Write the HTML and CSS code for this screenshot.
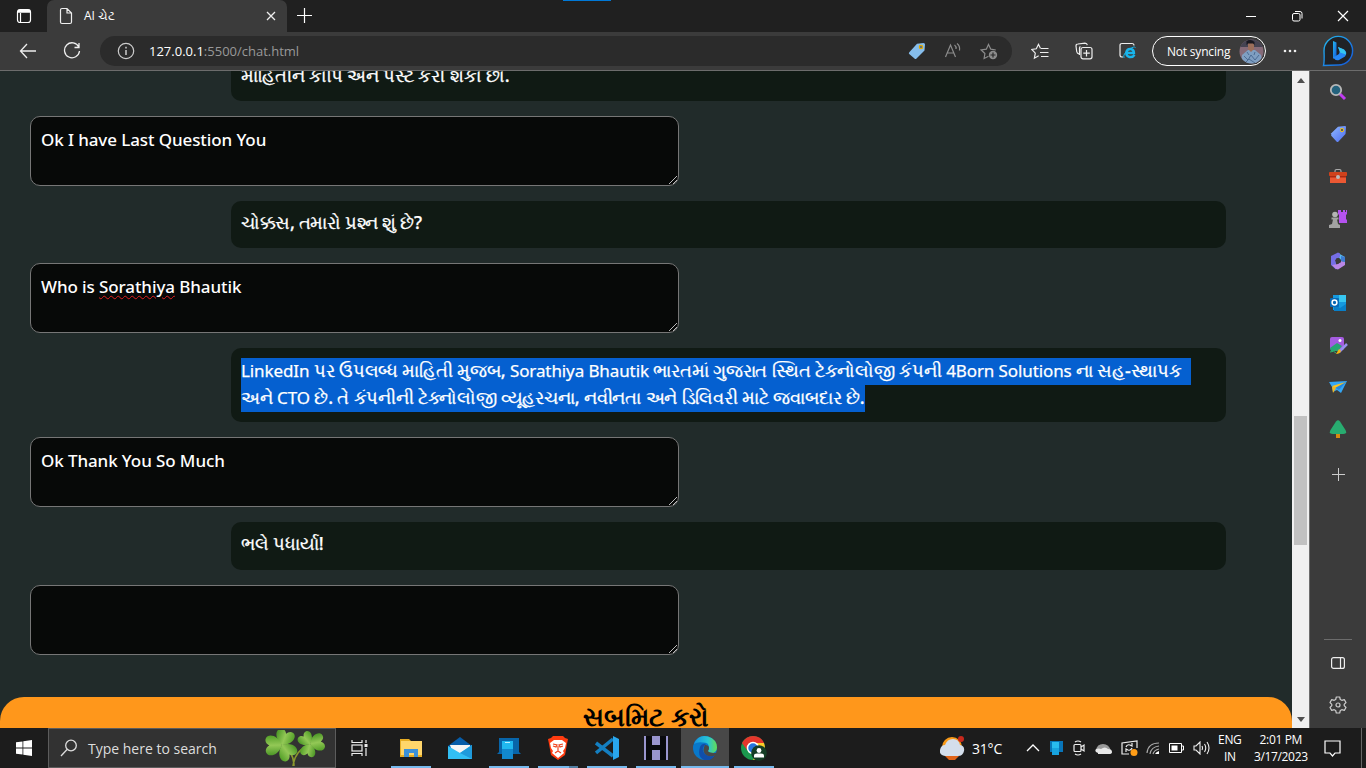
FILE: index.html
```html
<!DOCTYPE html>
<html lang="gu">
<head>
<meta charset="utf-8">
<title>AI ચેટ</title>
<link rel="stylesheet" href="styles.css">
</head>
<body>
<div class="screen">
  <header class="titlebar">
    <div class="tab-actions"><svg width="16" height="16" viewBox="0 0 16 16" fill="none" stroke="#fff" stroke-width="1.2"><rect x="1.5" y="1.5" width="13" height="13" rx="2.5"/><path d="M2 3.7h12M2 2.7h12" stroke-width="2"/><path d="M4.5 5v9.5"/></svg></div>
    <div class="tab">
      <svg width="14" height="18" viewBox="0 0 14 18" fill="none" stroke="#eee" stroke-width="1.2"><path d="M1.5 3q0-1.500 1.500-1.500h5l4.500 4.500v9q0 1.500-1.500 1.500H3q-1.500 0-1.500-1.500zM8 1.500V6h4.500"/></svg>
      <span class="tab-title">AI ચેટ</span>
      <svg width="10" height="10" viewBox="0 0 10 10" stroke="#eee" stroke-width="1.3"><path d="M1 1l8 8M9 1L1 9"/></svg>
    </div>
    <div class="new-tab"><svg width="15" height="15" viewBox="0 0 15 15" stroke="#fff" stroke-width="1.2"><path d="M7.500 0v15M0 7.500h15"/></svg></div>
    <div class="top-accent"></div>
    <div class="win-buttons">
      <svg width="12" height="12" viewBox="0 0 12 12" stroke="#fff"><path d="M1 6.500h10"/></svg>
      <svg width="12" height="12" viewBox="0 0 12 12" fill="none" stroke="#fff"><rect x="1.500" y="3.500" width="7.500" height="7.500" rx="1.500"/><path d="M4 1.500h5q2 0 2 2v5"/></svg>
      <svg width="12" height="12" viewBox="0 0 12 12" stroke="#fff" stroke-width="1.200"><path d="M1 1l10 10M11 1L1 11"/></svg>
    </div>
  </header>

  <div class="toolbar">
    <svg class="back" width="18" height="16" viewBox="0 0 18 16" fill="none" stroke="#eee" stroke-width="1.300"><path d="M17 8H1.500M8 1L1.500 8 8 15"/></svg>
    <svg class="reload" width="18" height="18" viewBox="0 0 18 18" fill="none" stroke="#eee" stroke-width="1.300"><path d="M15.800 5A7.500 7.500 0 1 0 16.500 9M16 1v4.500h-4.500"/></svg>
    <div class="address">
      <svg width="18" height="18" viewBox="0 0 18 18" fill="none" stroke="#ccc" stroke-width="1.200"><circle cx="9" cy="9" r="7.700"/><path d="M9 8v5M9 4.800v1.600" stroke-width="1.500"/></svg>
      <span class="url"><b>127.0.0.1</b>:5500/chat.html</span>
      <div class="address-icons">
        <svg width="18" height="18" viewBox="0 0 18 18"><path d="M1.300 10.300L9 1.800 15.500 1q1.500 0 1.500 1.500l-.5 6-8 8q-1 1-2 0L1.200 12q-.8-.8.100-1.700z" fill="#86bdeb"/><circle cx="13" cy="5" r="1.700" fill="#47698d" stroke="#e5a800" stroke-width="1.200"/></svg>
        <svg width="18" height="18" viewBox="0 0 18 18" fill="none" stroke="#8c8c8c" stroke-width="1.200"><path d="M1.500 15L6.500 3l5 12M3.200 11h6.600M10.500 3q2 1.500 1.500 4M13 1.500q3.300 2.500 2.500 7"/></svg>
        <svg width="18" height="18" viewBox="0 0 18 18" fill="none" stroke="#8c8c8c" stroke-width="1.200"><path d="M8.500 14.300L4.100 16.500l.8-5L1.200 8l5.100-.8L8.500 2.500l2.300 4.700 5 .8"/><circle cx="13" cy="13" r="4.200" fill="#8c8c8c" stroke="none"/><path d="M13 10.500v5M10.500 13h5" stroke="#2b2b2b"/></svg>
      </div>
    </div>
    <div class="tools">
      <svg width="18" height="18" viewBox="0 0 18 18" fill="none" stroke="#eee" stroke-width="1.200"><path d="M9.500 6.500L7.500 2.300 5.300 6.800.8 7.500l3.500 3.600-.9 5.100 4.300-2.400M10 6.500h7.500M9 10.500h8.500M10 14.500h7.500"/></svg>
      <svg width="18" height="18" viewBox="0 0 18 18" fill="none" stroke="#eee" stroke-width="1.200"><path d="M4 12Q2 11.500 1.700 9.500L1 4Q1 2 3 2l7-.8q2 0 2.300 2"/><path d="M4.500 13V6q0-1 1-1.400"/><rect x="6" y="5.500" width="11" height="11.300" rx="2"/><path d="M11.500 8v6.500M8.300 11.200h6.500"/></svg>
      <svg width="18" height="18" viewBox="0 0 18 18" fill="none"><path d="M4 15H3q-2 0-2-2V3.500q0-2 2-2h10q2 0 2 2" stroke="#eee" stroke-width="1.200"/><path d="M15.500 12.800q-1.700 2.700-5 2.200-3.600-1-3.200-4.500.8-3.500 4.300-3.400 3.200.3 3.300 3.800H8" stroke="#18b5ec" stroke-width="2.500"/><path d="M5 16q-1.500-4 5-8.700 5.500-3.500 6.500-1.700" stroke="#18b5ec"/></svg>
    </div>
    <div class="profile"><span>Not syncing</span>
      <svg width="25" height="25" viewBox="0 0 25 25"><defs><clipPath id="face"><circle cx="12.500" cy="12.500" r="12"/></clipPath></defs><g clip-path="url(#face)"><path d="M0 0h25v25H0z" fill="#866b79"/><path d="M0 0h25v8H0z" fill="#454352"/><path d="M2 25l1-9 6-5h7l6 5 2 9z" fill="#7f9fc2"/><path d="M9 4h6v6l-3 3-3-3z" fill="#9b6e5b"/><path d="M7.500 6V2q4.500-2.500 8 1v3l-1.500-1.500H9z" fill="#191820"/><path d="M5 17l4 4 3-5 4 5 4-5M6 24l4-4 6 4M8 13l2 3M16 13l-1 3" stroke="#4c6c94" fill="none"/></g></svg>
    </div>
    <svg class="more" width="14" height="4" viewBox="0 0 14 4" fill="#eee"><circle cx="2" cy="2" r="1.300"/><circle cx="7" cy="2" r="1.300"/><circle cx="12" cy="2" r="1.300"/></svg>
    <svg class="bing" width="32" height="32" viewBox="0 0 32 32"><defs><linearGradient id="bg" x2="1" y2="1"><stop stop-color="#24b9ed"/><stop offset="1" stop-color="#1455db"/></linearGradient></defs><path d="M1.500 30.500Q2.500 27 2 16a14.300 14.300 0 1 1 14.500 14z" fill="#202226" stroke="url(#bg)" stroke-width="1.400"/><path d="M11 6l3.500 1.500v13L11 24z" fill="url(#bg)"/><path d="M11 22.500l6-3.500 1-3-2-4 6 2.500q4 3 1 7l-6 3.500q-3 1.200-6-2.500z" fill="#2687f5"/><path d="M16 12l6 2.500q2 2 2 5l-6-2z" fill="#35c6ef"/></svg>
  </div>

  <div class="middle">
    <main class="page">
      <div class="chat">
        <div class="answer"><span class="t1">માહિતીને કોપિ અને પેસ્ટ કરી શકો છો.</span></div>
        <div class="question"><span>Ok I have Last Question You</span><svg class="grip" width="8" height="8" viewBox="0 0 8 8"><path d="M0 8L8 0M4 8l4-4" stroke="#bbb"/></svg></div>
        <div class="answer"><span class="t2">ચોક્કસ, તમારો પ્રશ્ન શું છે?</span></div>
        <div class="question"><span>Who is <u>Sorathiya</u> Bhautik</span><svg class="grip" width="8" height="8" viewBox="0 0 8 8"><path d="M0 8L8 0M4 8l4-4" stroke="#bbb"/></svg></div>
        <div class="answer double"><span class="selected s1"><em>LinkedIn</em> પર ઉપલબ્ધ માહિતી મુજબ, <em>Sorathiya Bhautik</em> ભારતમાં ગુજરાત સ્થિત ટેકનોલોજી કંપની <em>4Born Solutions</em> ના સહ-સ્થાપક</span><span class="selected s2">અને <em>CTO</em> છે. તે કંપનીની ટેક્નોલોજી વ્યૂહરચના, નવીનતા અને ડિલિવરી માટે જવાબદાર છે.</span></div>
        <div class="question"><span>Ok Thank You So Much</span><svg class="grip" width="8" height="8" viewBox="0 0 8 8"><path d="M0 8L8 0M4 8l4-4" stroke="#bbb"/></svg></div>
        <div class="answer tall"><span class="t3">ભલે પધાર્યા!</span></div>
        <div class="question"><svg class="grip" width="8" height="8" viewBox="0 0 8 8"><path d="M0 8L8 0M4 8l4-4" stroke="#bbb"/></svg></div>
      </div>
      <div class="submit"><span>સબમિટ કરો</span></div>
    </main>
    <div class="scrollbar"><i class="up"></i><div class="thumb"></div><i class="down"></i></div>
    <aside class="sidebar">
      <div class="side-apps">
        <svg width="18" height="18" viewBox="0 0 18 18"><path d="M11 11l5 5" stroke="#c03bf2" stroke-width="3"/><circle cx="7" cy="7" r="5.200" fill="#24627d" stroke="#b8b8b8" stroke-width="1.800"/></svg>
        <svg width="18" height="18" viewBox="0 0 18 18"><defs><linearGradient id="tg" x2="1" y2="1"><stop stop-color="#91baff"/><stop offset="1" stop-color="#4d6cf0"/></linearGradient></defs><path d="M1.500 9L9 1.800 16 1q1 0 1 1l-.5 7-7 7.500q-1 1-2 0l-5-5.500q-1-1 0-2z" fill="url(#tg)"/><circle cx="13" cy="5" r="1.700" fill="#575a65" stroke="#efc319"/></svg>
        <svg width="18" height="18" viewBox="0 0 18 18"><path d="M6 5V4q0-1.500 1.500-1.500h3Q12 2.500 12 4v1" fill="none" stroke="#aaa" stroke-width="1.200"/><rect y="5" width="18" height="4" rx=".8" fill="#cf421c"/><path d="M1 9h16v7H1z" fill="#eb5833"/><path d="M1 9h16v1.500H1z" fill="#a92912"/><circle cx="9" cy="10" r="2" fill="#bbb"/></svg>
        <svg width="18" height="18" viewBox="0 0 18 18"><path d="M10 0h2v2h2V0h2v2h1V0h1v4l-1 1v4l1 1v3h-8V5l-1-1V0z" fill="#b552ef"/><circle cx="6" cy="4.500" r="2.800" fill="#b4b4b4"/><path d="M2.500 7.500h7v2H8l1 4.500 2 1v3H0v-3l3-1 1-4.500H2.500z" fill="#a2a2a2"/></svg>
        <svg width="18" height="18" viewBox="0 0 18 18"><path d="M9 1l7 4v5l-4-1-3-3z" fill="#57b7ee"/><path d="M9 .5L2 4v9l5 4.500V11L6 8l5-3V1.500z" fill="#756ee6"/><path d="M3 13l6-1 3-3 4 1v3l-7 4.500-2-.5z" fill="#b987e6"/><path d="M12 4l4 1v5l-4-1z" fill="#3d7bd2"/><path d="M7 6.500l3-.8 2 2v2.500l-3 1.500-2-2z" fill="#3b3b3b"/></svg>
        <svg width="18" height="18" viewBox="0 0 18 18"><path d="M4 1h13v15H4z" fill="#1599df"/><path d="M10 1h7v7h-7z" fill="#37c6f1"/><path d="M5 10l6 4 6-4v7H5z" fill="#087fc8"/><rect x="1" y="4" width="9" height="9" rx="1" fill="#0668b5"/><circle cx="5.500" cy="8.500" r="2.400" fill="none" stroke="#fff" stroke-width="1.500"/></svg>
        <svg width="19" height="19" viewBox="0 0 19 19"><rect x="1" y="1" width="14" height="13" rx="2" fill="#a45be0"/><path d="M1 12l7-5 5 3-4 5H2z" fill="#28a674"/><circle cx="11" cy="4.500" r="1.500" fill="#fff"/><path d="M18 8l-8 8" stroke="#9790f0" stroke-width="2.500"/><path d="M10 13l2 2q-1 3-5 3z" fill="#f5b611"/><path d="M1 16q4-2 6 1" stroke="#2bb66d" fill="none"/></svg>
        <svg width="18" height="18" viewBox="0 0 18 18"><path d="M0 4l18-1-6 12-4-3-4 2-1-5z" fill="#34a6f4"/><path d="M3 9L17 4 7 10l-3 5z" fill="#f4b31c"/><path d="M18 3l-8 9-5-3z" fill="#2588db"/><path d="M3 8L17 4 6 10z" fill="#ffc21d"/></svg>
        <svg class="tree" width="18" height="20" viewBox="0 0 18 20"><path d="M7 14h4v5H7z" fill="#d88b10"/><path d="M7 2.500Q9 0 11 2.500L16.500 11q2 4-2 4h-11q-4 0-2-4z" fill="#28ac70"/></svg>
        <svg class="plus" width="13" height="13" viewBox="0 0 13 13" stroke="#ccc"><path d="M6.500 0v13M0 6.500h13"/></svg>
      </div>
      <div class="side-bottom">
        <svg width="14" height="12" viewBox="0 0 14 12" fill="none" stroke="#eee" stroke-width="1.200"><rect x=".6" y=".6" width="12.800" height="10.800" rx="2"/><path d="M9.500 1v10"/></svg>
        <svg width="18" height="18" viewBox="0 0 18 18" fill="none" stroke="#ccc" stroke-width="1.200"><path d="M7.300 1h3.400l.6 2.500 1.500.8 2.500-.7L17 6.500 15.200 8.300v1.400l1.800 1.800-1.700 2.900-2.500-.7-1.500.8-.6 2.500H7.300l-.6-2.500-1.500-.8-2.500.7L1 11.500l1.800-1.800V8.300L1 6.500l1.700-2.900 2.500.7 1.500-.8z" stroke-linejoin="round"/><circle cx="9" cy="9" r="2"/></svg>
      </div>
    </aside>
  </div>

  <footer class="taskbar">
    <div class="start"><svg width="16" height="16" viewBox="0 0 16 16" fill="#fff"><path d="M0 2.300L6.500 1.400v6.200H0zM7.300 1.200L16 0v7.600H7.300zM0 8.400h6.500v6.200L0 13.700zM7.300 8.400H16V16l-8.700-1.200z"/></svg></div>
    <div class="search">
      <svg width="18" height="18" viewBox="0 0 18 18" fill="none" stroke="#ddd" stroke-width="1.300"><circle cx="11" cy="6.500" r="5.300"/><path d="M7 10.500L1 17"/></svg>
      <span>Type here to search</span>
      <svg class="clover" width="60" height="36" viewBox="0 0 60 36"><defs><linearGradient id="lg" x2="1"><stop stop-color="#4b9626"/><stop offset=".5" stop-color="#93c856"/><stop offset="1" stop-color="#539f28"/></linearGradient><path id="leaf" d="M0 0C-9-3-11-12-6-14-3-15-1-13 0-11 1-13 3-15 6-14 11-12 9-3 0 0z" fill="url(#lg)"/></defs><path d="M17 15q12 7 12 21M45 15Q30 20 28 36" fill="none" stroke="#8b972d" stroke-width="1.500"/><use href="#leaf" transform="translate(17 15) rotate(20) scale(1.080)"/><use href="#leaf" transform="translate(17 15) rotate(-92) scale(1.150)"/><use href="#leaf" transform="translate(17 15) rotate(142) scale(1.100)"/><use href="#leaf" transform="translate(45 14) rotate(-40) scale(.88)"/><use href="#leaf" transform="translate(45 14) rotate(78)"/><use href="#leaf" transform="translate(45 14) rotate(-165) scale(.88)"/></svg>
    </div>
    <div class="taskview"><svg width="17" height="16" viewBox="0 0 17 16" fill="none" stroke="#eee" stroke-width="1.200"><path d="M1 0v2.500h10V0M1 16v-2.500h10V16"/><rect x="1" y="5" width="10" height="6"/><path d="M15 0v3M15 8v8"/><path d="M13.500 4h3v3h-3z" fill="#eee" stroke="none"/></svg></div>
    <div class="apps">
      <div class="app open"><svg width="24" height="24" viewBox="0 0 24 24"><path d="M1 3h9l2 2h11v16H1z" fill="#e7ad24"/><path d="M2 5h21v14H2z" fill="#ffd66b"/><path d="M5 20v-7h14v8h-4v-4h-5v4H5z" fill="#3c91d8"/></svg></div>
      <div class="app"><svg width="24" height="24" viewBox="0 0 24 24"><path d="M0 10L12 1l12 9v6H0z" fill="#075da9"/><path d="M2 9h20v6l-9 3-9-3z" fill="#f5f5f5"/><path d="M0 10l12 7L24 9v14H0z" fill="#32bff4"/><path d="M12 17L24 9v14z" fill="#1f9adb"/></svg></div>
      <div class="app open"><svg width="24" height="24" viewBox="0 0 24 24"><path d="M2 2h20v14l2 2H0l2-2z" fill="#0865a9"/><path d="M5 5h11v18H5z" fill="#1288cd"/><path d="M5 5h11v8H5z" fill="#20b9f0"/><path d="M8 6h5v1H8z" fill="#b9efff"/></svg></div>
      <div class="app open multi"><svg width="24" height="24" viewBox="0 0 24 24"><path d="M7 0h10l2 2 3 1-1 5-2 11-7 5-7-5L3 8 2 3l3-1z" fill="#ff3c10"/><path d="M8 4h8l4 3-1 5-2 3 1 2-6 5-6-5 1-2-2-3-1-5z" fill="#fff"/><path d="M7 8l4 1-1 2-3-1M17 8l-4 1 1 2 3-1M12 10v5M9 17l3-2 3 2" stroke="#f04420" fill="none" stroke-width="1.200"/></svg></div>
      <div class="app open"><svg width="24" height="24" viewBox="0 0 24 24" fill="none"><path d="M1 7l17 13M1 17L18 3" stroke="#147fc1" stroke-width="3.500"/><path d="M18 0l6 3v18l-6 3z" fill="#29a7ee"/></svg></div>
      <div class="app open"><svg width="24" height="24" viewBox="0 0 24 24"><path d="M0 0h24v24H0z" fill="#9995ce"/><path d="M2 0h6v24H2zM16 0h6v24h-6zM5 9h14v5H5z" fill="#090a0d"/></svg></div>
      <div class="app open active"><svg width="24" height="24" viewBox="0 0 24 24"><defs><linearGradient id="eg"><stop stop-color="#1490df"/><stop offset=".6" stop-color="#28c5d6"/><stop offset="1" stop-color="#65de52"/></linearGradient></defs><circle cx="12" cy="12" r="12" fill="#0878ca"/><path d="M1 8Q5-2 15 .5q9 3 9 11 0 6-8 6-4-1-1-3 3-8-5-8-5-1-9 1.500z" fill="url(#eg)"/><path d="M7 11q2-4 6-3-6 5-1 10 5 4 10 1-4 7-11 5-7-3-4-13z" fill="#104eaa"/><path d="M12 9q4 0 4 3 0 2-1 3 1 2 9 2-1 3-4 3-5 1-8-2-3-4 0-9z" fill="#484848"/></svg></div>
      <div class="app open"><svg width="26" height="26" viewBox="0 0 26 26"><circle cx="12" cy="13" r="12" fill="#1b984e"/><path d="M12 1q8 0 11 7H12l-6 7-5-7Q5 1 12 1z" fill="#e5362c"/><path d="M12 8h11q3 9-4 15l-7 2 5-11z" fill="#ffca28"/><circle cx="12" cy="13" r="5.500" fill="#2675dd" stroke="#fff" stroke-width="1.500"/><circle cx="18" cy="18" r="7.800" fill="#153d25"/><circle cx="18" cy="15.500" r="2.400" fill="#fff"/><path d="M13 22.500v-2q0-2 3-2h4q3 0 3 2v2z" fill="#fff"/></svg></div>
    </div>
    <div class="weather"><svg width="26" height="24" viewBox="0 0 26 24"><circle cx="12" cy="11" r="10" fill="#f99a18"/><path d="M5 20h14l-4 4H9z" fill="#e06419"/><path d="M5 20q-6-1-5-6 1-5 5-5 2-6 8-6 6 0 7 6 5 1 4 6-1 5-6 5z" fill="#d4deeb"/><circle cx="21" cy="3" r="3" fill="#c8291d"/></svg><span>31°C</span></div>
    <div class="tray">
      <svg width="14" height="8" viewBox="0 0 14 8" fill="none" stroke="#fff" stroke-width="1.300"><path d="M1 7l6-6 6 6"/></svg>
      <svg width="15" height="14" viewBox="0 0 15 14"><path d="M1 0h13v11H1z" fill="#0875b9"/><path d="M3 1h7v13H3z" fill="#18a3df"/><path d="M3 1h7v6H3z" fill="#28bbef"/></svg>
      <svg width="14" height="16" viewBox="0 0 14 16" fill="none" stroke="#eee" stroke-width="1.200"><rect x="2" y="4.500" width="7" height="7" rx="1"/><path d="M9 7l3-2v6L9 9M3 2q3-2 6 0M3 14q3 2 6 0"/></svg>
      <svg width="17" height="11" viewBox="0 0 17 11"><path d="M1 7q1-6 7-6t8 7H3z" fill="#999"/><path d="M3 10q-4-1-2-4 3-1 5 0 4-3 7 0 4 0 4 3 0 2-3 2H3z" fill="#e8e8e8"/></svg>
      <svg width="17" height="16" viewBox="0 0 17 16" fill="none" stroke="#eee" stroke-width="1.200"><path d="M8 14H1V3l15-2v7"/><path d="M5 7q1-3 4-2l2 1V3M11 8q-1 3-4 2L5 9v3"/><circle cx="13" cy="12.500" r="3.500" fill="#ff9d17" stroke="none"/></svg>
      <svg width="14" height="14" viewBox="0 0 14 14" fill="none" stroke="#aaa" stroke-width="1.200"><path d="M1 12Q2 2 13 2M4 13q1-7 9-8M7 13q1-4 6-5"/><path d="M9 13q1-2 4-3v3z" fill="#fff" stroke="none"/></svg>
      <svg width="15" height="10" viewBox="0 0 15 10" fill="none" stroke="#fff"><path d="M.5.5h12v9H.5zM13 3h1.500v4H13"/><path d="M2.500 2.500h6v5h-6z" fill="#fff" stroke="none"/></svg>
      <svg width="17" height="14" viewBox="0 0 17 14" fill="none" stroke="#eee" stroke-width="1.100"><path d="M1 5h2l4-4v12L3 9H1zM9 5q1 2 0 4M11.500 3q2.500 4 0 8M14 1q4 6 0 12"/></svg>
    </div>
    <div class="lang"><span>ENG</span><span>IN</span></div>
    <div class="clock"><span>2:01 PM</span><span>3/17/2023</span></div>
    <svg class="notice" width="17" height="17" viewBox="0 0 17 17" fill="none" stroke="#fff" stroke-width="1.200"><path d="M1 1h15v12h-5l-2.500 3L6 13H1z"/></svg>
    <i class="peek"></i>
  </footer>
</div>
</body>
</html>
```

FILE: styles.css
```css
* { box-sizing: border-box; }
body { margin: 0; overflow: hidden; font-family: "Open Sans", "Noto Sans", sans-serif; color: #fff; }
svg { display: block; flex: none; }
.screen { width: 1366px; height: 768px; display: flex; flex-direction: column; background: #212b2a; }

.titlebar { height: 32px; flex: none; display: flex; background: #202020; position: relative; }
.tab-actions { width: 47px; padding: 8px 0 0 16px; }
.tab { width: 240px; height: 32px; display: flex; align-items: center; background: #3b3b3b; border-radius: 7px 7px 0 0; padding: 0 11px 0 12px; }
.tab-title { flex: 1; margin-left: 11px; font-size: 12px; line-height: 18px; white-space: nowrap; }
.new-tab { padding: 8px 0 0 10px; }
.top-accent { position: absolute; left: 563px; top: 0; width: 48px; height: 1px; background: #0078d7; }
.win-buttons { margin-left: auto; display: flex; align-items: center; gap: 34px; padding-right: 17px; }

.toolbar { height: 39px; flex: none; display: flex; align-items: center; background: #3b3b3b; border-bottom: 1px solid #6c6c6c; }
.back { margin-left: 19px; }
.reload { margin-left: 26px; }
.address { width: 912px; height: 30px; margin-left: 19px; display: flex; align-items: center; background: #2b2b2b; border-radius: 15px; padding: 0 14px 0 17px; }
.url { margin-left: 14px; font-size: 13px; color: #999; white-space: nowrap; }
.url b { color: #fff; font-weight: 400; }
.address-icons { margin-left: auto; display: flex; gap: 18px; }
.tools { display: flex; gap: 26px; margin-left: 19px; }
.profile { width: 114px; height: 30px; margin-left: 15px; border: 1px solid #fff; border-radius: 15px; display: flex; align-items: center; justify-content: space-between; padding: 0 1px 0 14px; font-size: 12px; letter-spacing: -.2px; white-space: nowrap; }
.more { margin-left: 17px; }
.bing { margin-left: 25px; }

.middle { height: 657px; flex: none; display: flex; }
.page { width: 1292px; height: 657px; overflow: hidden; background: #212b2a; font: 500 18px/27px "Noto Sans", sans-serif; }
.chat { display: flex; flex-direction: column; gap: 15px; padding-left: 30px; margin-top: -17px; }
.chat span { white-space: nowrap; }
.answer { width: 995px; height: 47px; margin-left: 201px; padding: 8px 10px; background: #101a14; border-radius: 10px; font-size: 18px; letter-spacing: -.200px; -webkit-text-stroke: .25px currentColor; }
.answer em { font-style: normal; font-size: 17px; font-weight: 400; letter-spacing: -.1px; }
.t1, .t3 { letter-spacing: -.150px; }
.t2 { letter-spacing: -.350px; }
.tall { height: 48px; }
.double { height: 74px; padding-top: 10px; }
.question { width: 649px; height: 70px; padding: 9px 10px; background: #070908; border: 1px solid #767676; border-radius: 10px; position: relative; font-size: 17px; letter-spacing: -.1px; }
.question u { text-decoration: underline wavy #e02020 1px; text-underline-offset: 2px; }
.grip { position: absolute; right: 1px; bottom: 1px; }
.selected { display: block; background: #0560d0; height: 27px; line-height: 25px; }
.s1 { width: 950px; }
.s2 { width: 624px; }
.submit { height: 50px; margin-top: 42px; background: #ff971b; border-radius: 24px 24px 0 0; color: #000; text-align: center; font-size: 26.300px; line-height: 38px; font-weight: 600; }
.scrollbar { width: 17px; background: #f0f0f0; display: flex; flex-direction: column; align-items: center; padding: 7px 0 6px; }
.up, .down { border: 4px solid transparent; }
.up { border-top: 0; border-bottom: 5px solid #505050; }
.down { border-bottom: 0; border-top: 5px solid #505050; margin-top: auto; }
.thumb { width: 13px; height: 129px; margin-top: 333px; background: #c1c1c1; }
.sidebar { width: 57px; background: #3b3b3b; border-left: 1px solid #6c6c6c; display: flex; flex-direction: column; justify-content: space-between; }
.side-apps { display: grid; grid-template-rows: repeat(10, 42.200px); place-items: center; }
.plus { margin-top: 5px; }
.tree { margin-bottom: 2px; }
.side-bottom { height: 89px; margin: 0 14px; border-top: 1px solid #6c6c6c; display: flex; flex-direction: column; align-items: center; padding-top: 17px; gap: 27px; }

.taskbar { height: 40px; flex: none; display: flex; background: #1c1c1c; align-items: center; }
.start { width: 48px; padding-left: 16px; }
.search { width: 288px; height: 40px; display: flex; align-items: center; border: 1px solid #5c5c5c; background: #323232; padding-left: 11px; color: #ddd; font-size: 14px; }
.search span { margin-left: 10px; width: 177px; white-space: nowrap; }
.taskview { width: 51px; padding-left: 15px; }
.apps { display: flex; height: 40px; gap: 1px; }
.app { width: 48px; height: 40px; display: flex; justify-content: center; align-items: center; background: no-repeat center bottom / 40px 2px; }
.open { background-image: linear-gradient(#76b9ed, #76b9ed); }
.multi { background-image: linear-gradient(90deg, #76b9ed 78%, #527fa3 78%); }
.active { background-color: #484848; background-size: 48px 2px; }
.weather { display: flex; align-items: center; gap: 6px; margin-left: 162px; width: 86px; font-size: 14px; letter-spacing: -.2px; }
.tray { display: flex; align-items: center; gap: 8.700px; }
.lang, .clock { display: flex; flex-direction: column; align-items: center; font-size: 12px; line-height: 17px; letter-spacing: -.35px; white-space: nowrap; }
.lang { width: 24px; margin-left: 8px; }
.clock { width: 52px; margin-left: 13px; }
.notice { margin-left: 17px; }
.peek { margin-left: auto; margin-right: 4px; width: 1px; height: 40px; background: #666; }
```
